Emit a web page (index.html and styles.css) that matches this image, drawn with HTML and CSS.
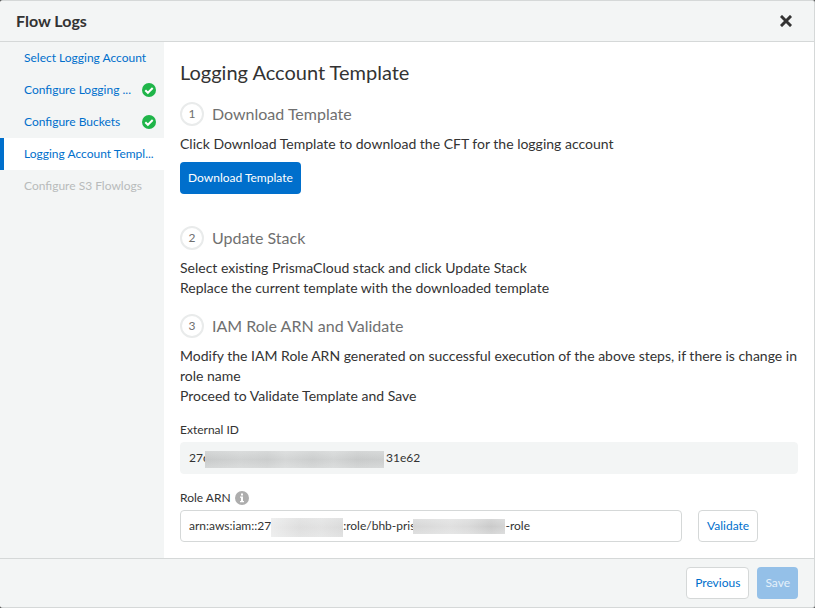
FILE: index.html
```html
<!DOCTYPE html>
<html lang="en">
<head>
<meta charset="utf-8">
<title>Flow Logs</title>
<link rel="stylesheet" href="styles.css">
</head>
<body>
<div class="modal">
  <header class="modal-header">
    <h1>Flow Logs</h1>
    <button class="close" type="button" aria-label="Close">
      <svg width="12" height="12" viewBox="0 0 12 12"><path d="M2 2l8 8M10 2l-8 8" stroke="#333" stroke-width="3" stroke-linecap="square"/></svg>
    </button>
  </header>
  <div class="modal-body">
    <nav class="steps">
      <a href="#"><span>Select Logging Account</span></a>
      <a href="#" class="done"><span>Configure Logging ...</span>
        <svg width="14" height="14" viewBox="0 0 14 14"><circle cx="7" cy="7" r="7" fill="#1fb549"/><path d="M3.3 7.2l2.6 2.6 4.8-4.8" fill="none" stroke="#fff" stroke-width="2"/></svg>
      </a>
      <a href="#" class="done"><span>Configure Buckets</span>
        <svg width="14" height="14" viewBox="0 0 14 14"><circle cx="7" cy="7" r="7" fill="#1fb549"/><path d="M3.3 7.2l2.6 2.6 4.8-4.8" fill="none" stroke="#fff" stroke-width="2"/></svg>
      </a>
      <a href="#" class="active" aria-current="step"><span>Logging Account Templ...</span></a>
      <a class="disabled"><span>Configure S3 Flowlogs</span></a>
    </nav>
    <main class="content">
      <h2>Logging Account Template</h2>
      <section class="step step-action">
        <h3><span class="number">1</span>Download Template</h3>
        <p>Click Download Template to download the CFT for the logging account</p>
        <button class="button primary" type="button">Download Template</button>
      </section>
      <section class="step">
        <h3><span class="number">2</span>Update Stack</h3>
        <p>Select existing PrismaCloud stack and click Update Stack</p>
        <p>Replace the current template with the downloaded template</p>
      </section>
      <section class="step">
        <h3><span class="number">3</span>IAM Role ARN and Validate</h3>
        <p>Modify the IAM Role ARN generated on successful execution of the above steps, if there is change in role name</p>
        <p>Proceed to Validate Template and Save</p>
      </section>
      <div class="field">
        <label for="external-id">External ID</label>
        <div class="control">
          <input id="external-id" class="filled" type="text" readonly value="27c&emsp;&emsp;&emsp;&emsp;&emsp;&emsp;&emsp;&emsp;&emsp;&emsp;&emsp;&emsp;&emsp;&emsp;&emsp;&emsp;&emsp;&emsp;&nbsp;&nbsp;&nbsp;&nbsp;&nbsp;31e62">
          <span class="mask mask-id"></span>
        </div>
      </div>
      <div class="field">
        <div class="label-row">
          <label for="role-arn">Role ARN</label>
          <svg width="14" height="14" viewBox="0 0 14 14"><circle cx="7" cy="7" r="7" fill="#adadad"/><path d="M6 2.5h2v2H6zM5 5.5h3V10h1v1.300H5V10h1V6.800H5z" fill="#fff"/></svg>
        </div>
        <div class="arn-row">
          <div class="control">
            <input id="role-arn" type="text" value="arn:aws:iam::27&emsp;&emsp;&emsp;&emsp;&emsp;&emsp;&emsp;&emsp;:role/bhb-pris&emsp;&emsp;&emsp;&emsp;&emsp;&emsp;&emsp;&emsp;&emsp;&emsp;-role">
            <span class="mask mask-account"></span>
            <span class="mask mask-role"></span>
          </div>
          <button class="button" type="button">Validate</button>
        </div>
      </div>
    </main>
  </div>
  <footer class="modal-footer">
    <button class="button" type="button">Previous</button>
    <button class="button primary" type="button" disabled>Save</button>
  </footer>
</div>
</body>
</html>
```
FILE: styles.css
```css
* { box-sizing: border-box; }
body {
  margin: 0;
  background: #555;
  color: #333;
  font: 14px/20px Lato, sans-serif;
}
h1, h2, h3, p { margin: 0; }
button, input { font: inherit; color: inherit; }
svg { display: block; flex: none; }

.modal {
  display: flex;
  flex-direction: column;
  min-height: 100vh;
  overflow: hidden;
  background: #fff;
  border: 1px solid #d5d8d8;
  border-left: 0;
  border-radius: 3px;
}
.modal-header {
  display: flex;
  align-items: center;
  justify-content: space-between;
  padding: 10px 22px 10px 16px;
  background: #f3f5f5;
  border-bottom: 1px solid #d5d8d8;
}
h1 { font-size: 16px; line-height: 20px; font-weight: 700; }
.close { padding: 0; border: 0; background: none; cursor: pointer; }

.modal-body { display: flex; flex: 1; }
.steps { flex: none; width: 164px; background: #f3f5f5; }
.steps a {
  display: flex;
  align-items: center;
  gap: 8px;
  height: 32px;
  padding: 0 8px 0 20px;
  border-left: 4px solid transparent;
  color: #006fcc;
  font-size: 12px;
  text-decoration: none;
}
.steps span {
  flex: 1;
  white-space: nowrap;
}
.steps .active { background: #fff; border-color: #006fcc; }
.steps .disabled { color: #b8bbbb; }

.content { flex: 1; min-width: 0; padding: 16px; }
h2 { margin-bottom: 16px; font-size: 20px; line-height: 28px; font-weight: 400; }
.step { margin-bottom: 16px; }
.step-action { margin-bottom: 32px; }
h3 {
  display: flex;
  align-items: center;
  gap: 8px;
  margin-bottom: 8px;
  color: #707070;
  font-size: 16px;
  line-height: 24px;
  font-weight: 400;
}
.number {
  width: 24px;
  height: 24px;
  border: 2px solid #e9ebeb;
  border-radius: 50%;
  font-size: 12px;
  line-height: 20px;
  text-align: center;
}
.button {
  height: 32px;
  padding: 0 8px;
  background: #fff;
  border: 1px solid #d5d8d8;
  border-radius: 4px;
  color: #006fcc;
  font-size: 12px;
  cursor: pointer;
}
.primary { background: #006fcc; border: 0; color: #fff; }
.primary:disabled { background: #94c0e8; color: #e4f0fa; cursor: default; }
.step .button { margin-top: 8px; display: block; }

.field { margin-top: 16px; }
.field label { display: block; margin-bottom: 4px; font-size: 12px; line-height: 16px; }
.label-row { display: flex; align-items: center; gap: 4px; margin-bottom: 4px; }
.label-row label { margin-bottom: 0; }
.control { position: relative; }
.control input {
  display: block;
  width: 100%;
  height: 32px;
  padding: 0 8px 2px;
  background: #fff;
  border: 1px solid #d5d8d8;
  border-radius: 4px;
  font-size: 12px;
}
.control .filled { background: #f3f5f5; border-color: #f3f5f5; }
.arn-row { display: grid; grid-template-columns: 1fr 100px; gap: 16px; }
.arn-row .button { justify-self: start; }

.mask { position: absolute; }
.mask::after {
  content: "";
  position: absolute;
  inset: 0;
  background: linear-gradient(#f3f5f5, transparent 50%, #f3f5f5);
  opacity: 0.3;
}
.mask-id {
  left: 25px;
  top: 9px;
  width: 179px;
  height: 17px;
  background: linear-gradient(90deg, #c8caca, #d0d2d2 20%, #cbcdcd 35%, #d4d6d6 45%, #cbcdcd 60%, #d2d4d4 72%, #c8caca 85%, #cccece);
}
.mask-account {
  left: 91px;
  top: 8px;
  width: 72px;
  height: 19px;
  background: linear-gradient(90deg, #ececec, #dedede 40%, #e2e2e2 70%, #dadada);
}
.mask-role {
  left: 233px;
  top: 9px;
  width: 92px;
  height: 15px;
  background: linear-gradient(90deg, #d6d6d6, #e0e0e0 40%, #dadada 60%, #cacaca 85%, #d4d4d4);
}

.modal-footer {
  display: flex;
  justify-content: flex-end;
  gap: 8px;
  padding: 8px 16px;
  background: #f3f5f5;
  border-top: 1px solid #d5d8d8;
}
```
